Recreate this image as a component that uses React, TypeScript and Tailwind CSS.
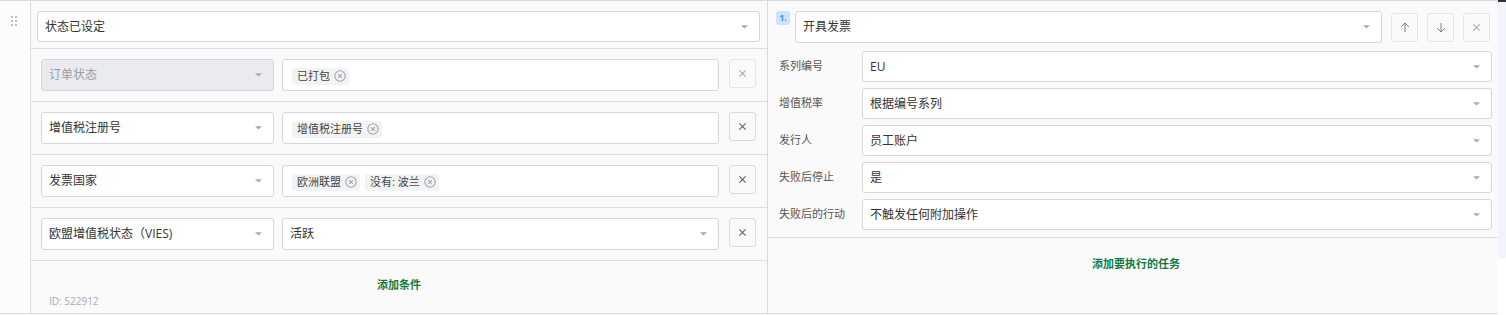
import type { ReactNode } from 'react';

const font = { fontFamily: '"Open Sans", "Noto Sans CJK SC", sans-serif' };

function Caret() {
    return (
        <svg width="7" height="4" viewBox="0 0 7 4" className="shrink-0">
            <path d="M0 0.2 L7 0.2 L3.5 3.6 Z" fill="#a8acb1" />
        </svg>
    );
}

function RemoveIcon() {
    return (
        <svg width="12" height="12" viewBox="0 0 12 12" className="shrink-0">
            <circle cx="6" cy="6" r="5.2" fill="none" stroke="#a3a7ad" strokeWidth="1.1" />
            <path d="M4.2 4.2 L7.8 7.8 M7.8 4.2 L4.2 7.8" stroke="#a3a7ad" strokeWidth="1.1" />
        </svg>
    );
}

function Cross({ light }: { light?: boolean }) {
    return (
        <svg width="9" height="9" viewBox="0 0 10 10">
            <path d="M1.5 1.5 L8.5 8.5 M8.5 1.5 L1.5 8.5" stroke={light ? '#a9adb2' : '#5c6167'} strokeWidth="1.2" />
        </svg>
    );
}

function Arrow({ down }: { down?: boolean }) {
    return (
        <svg width="10" height="11" viewBox="0 0 10 11" style={{ transform: down ? 'rotate(180deg)' : undefined }}>
            <path d="M5 10 L5 1.2 M1.2 4.8 L5 1 L8.8 4.8" fill="none" stroke="#7a7f85" strokeWidth="1" />
        </svg>
    );
}

function Select({ value, className, disabled }: { value: string; className: string; disabled?: boolean }) {
    return (
        <div
            className={`flex items-center justify-between rounded-[3px] border border-[#d3d7dc] pl-[7px] pr-[11px] text-[12px] ${
                disabled ? 'bg-[#e9ebee] text-[#9a9ea3]' : 'bg-white text-[#333]'
            } ${className}`}
        >
            <span>{value}</span>
            <Caret />
        </div>
    );
}

function Chip({ children }: { children: ReactNode }) {
    return (
        <span className="flex h-[17px] items-center gap-[4px] rounded-[3px] bg-[#f1f3f5] pl-[5px] pr-[3px] text-[11px] text-[#444]">
            {children}
            <RemoveIcon />
        </span>
    );
}

function TagInput({ chips }: { chips: string[] }) {
    return (
        <div className="flex h-[32px] w-[437px] items-center gap-[5px] rounded-[3px] border border-[#d3d7dc] bg-white pt-[2px] pl-[9px]">
            {chips.map((c) => (
                <Chip key={c}>{c}</Chip>
            ))}
        </div>
    );
}

function IconButton({ children, light }: { children: ReactNode; light?: boolean }) {
    return (
        <button
            type="button"
            className={`flex h-[29px] w-[27px] shrink-0 items-center justify-center rounded-[3px] border ${
                light ? 'border-[#e3e6e9]' : 'border-[#d7dadf]'
            } bg-[#fafafa]`}
        >
            {children}
        </button>
    );
}

const conditions = [
    { field: '订单状态', disabled: true, chips: ['已打包'] },
    { field: '增值税注册号', chips: ['增值税注册号'] },
    { field: '发票国家', chips: ['欧洲联盟', '没有: 波兰'] },
    { field: '欧盟增值税状态（VIES)', select: '活跃' },
];

const params = [
    { label: '系列编号', value: 'EU' },
    { label: '增值税率', value: '根据编号系列' },
    { label: '发行人', value: '员工账户' },
    { label: '失败后停止', value: '是' },
    { label: '失败后的行动', value: '不触发任何附加操作' },
];

export default function App() {
    return (
        <div className="flex h-[315px] w-[1506px] bg-[#fafafa]" style={font}>
            {/* drag handle */}
            <div className="h-[314px] w-[31px] shrink-0 border-t border-r border-b border-[#d8dce0] bg-[#fcfcfc] pt-[15px] pl-[11px]">
                <div className="grid w-[6px] grid-cols-2 gap-[2px]">
                    {[0, 1, 2, 3, 4, 5].map((i) => (
                        <span key={i} className="h-[2px] w-[2px] bg-[#b9bdc2]" />
                    ))}
                </div>
            </div>

            {/* conditions */}
            <div className="flex h-[314px] w-[737px] shrink-0 flex-col border-t border-r border-b border-[#d8dce0]">
                <div className="border-b border-[#dcdfe3] pt-[10px] pr-[7px] pb-[6px] pl-[6px]">
                    <Select value="状态已设定" className="h-[31px]" />
                </div>
                {conditions.map((c) => (
                    <div key={c.field} className="flex items-start border-b border-[#dcdfe3] py-[10px] pl-[10px]">
                        <Select value={c.field} disabled={c.disabled} className="h-[32px] w-[233px]" />
                        <div className="ml-[8px]">
                            {c.chips ? <TagInput chips={c.chips} /> : <Select value={c.select ?? ''} className="h-[32px] w-[437px]" />}
                        </div>
                        <div className="ml-[10px]">
                            <IconButton light={c.disabled}>
                                <Cross light={c.disabled} />
                            </IconButton>
                        </div>
                    </div>
                ))}
                <div className="flex flex-1 flex-col items-center pt-[16px]">
                    <span className="text-[11px] font-bold text-[#0f7a3f]">添加条件</span>
                    <span className="self-start pl-[18px] text-[10px] leading-[14px] text-[#a7abb0]">ID: 522912</span>
                </div>
            </div>

            {/* actions */}
            <div className="flex h-[314px] w-[730px] shrink-0 flex-col border-t border-b border-[#d8dce0]">
                <div className="flex items-start pt-[10px] pr-[6px] pl-[8px]">
                    <span className="flex h-[14px] w-[14px] items-center justify-center rounded-[3px] bg-[#cde3fb] text-[9px] font-bold text-[#3d8fe0]">
                        1.
                    </span>
                    <Select value="开具发票" className="ml-[5px] h-[32px] w-[587px]" />
                    <div className="ml-[9px] flex gap-[9px] pt-[2px]">
                        <IconButton light>
                            <Arrow />
                        </IconButton>
                        <IconButton light>
                            <Arrow down />
                        </IconButton>
                        <IconButton light>
                            <Cross light />
                        </IconButton>
                    </div>
                </div>
                <div className="flex flex-col gap-[6px] pt-[8px] pr-[6px] pb-[7px] pl-[11px]">
                    {params.map((p) => (
                        <div key={p.label} className="flex items-center">
                            <span className="w-[83px] shrink-0 text-[11px] text-[#555]">{p.label}</span>
                            <Select value={p.value} className="h-[31px] flex-1" />
                        </div>
                    ))}
                </div>
                <div className="flex flex-1 justify-center border-t border-[#dcdfe3] pt-[18px] pl-[6px]">
                    <span className="text-[11px] font-bold text-[#0f7a3f]">添加要执行的任务</span>
                </div>
            </div>

            {/* scroll strip */}
            <div className="flex w-[8px] flex-col">
                <div className="h-[2px] bg-[#333]" />
                <div className="h-[256px] bg-[#f1f5fb]" />
                <div className="flex-1 bg-white" />
            </div>
        </div>
    );
}
